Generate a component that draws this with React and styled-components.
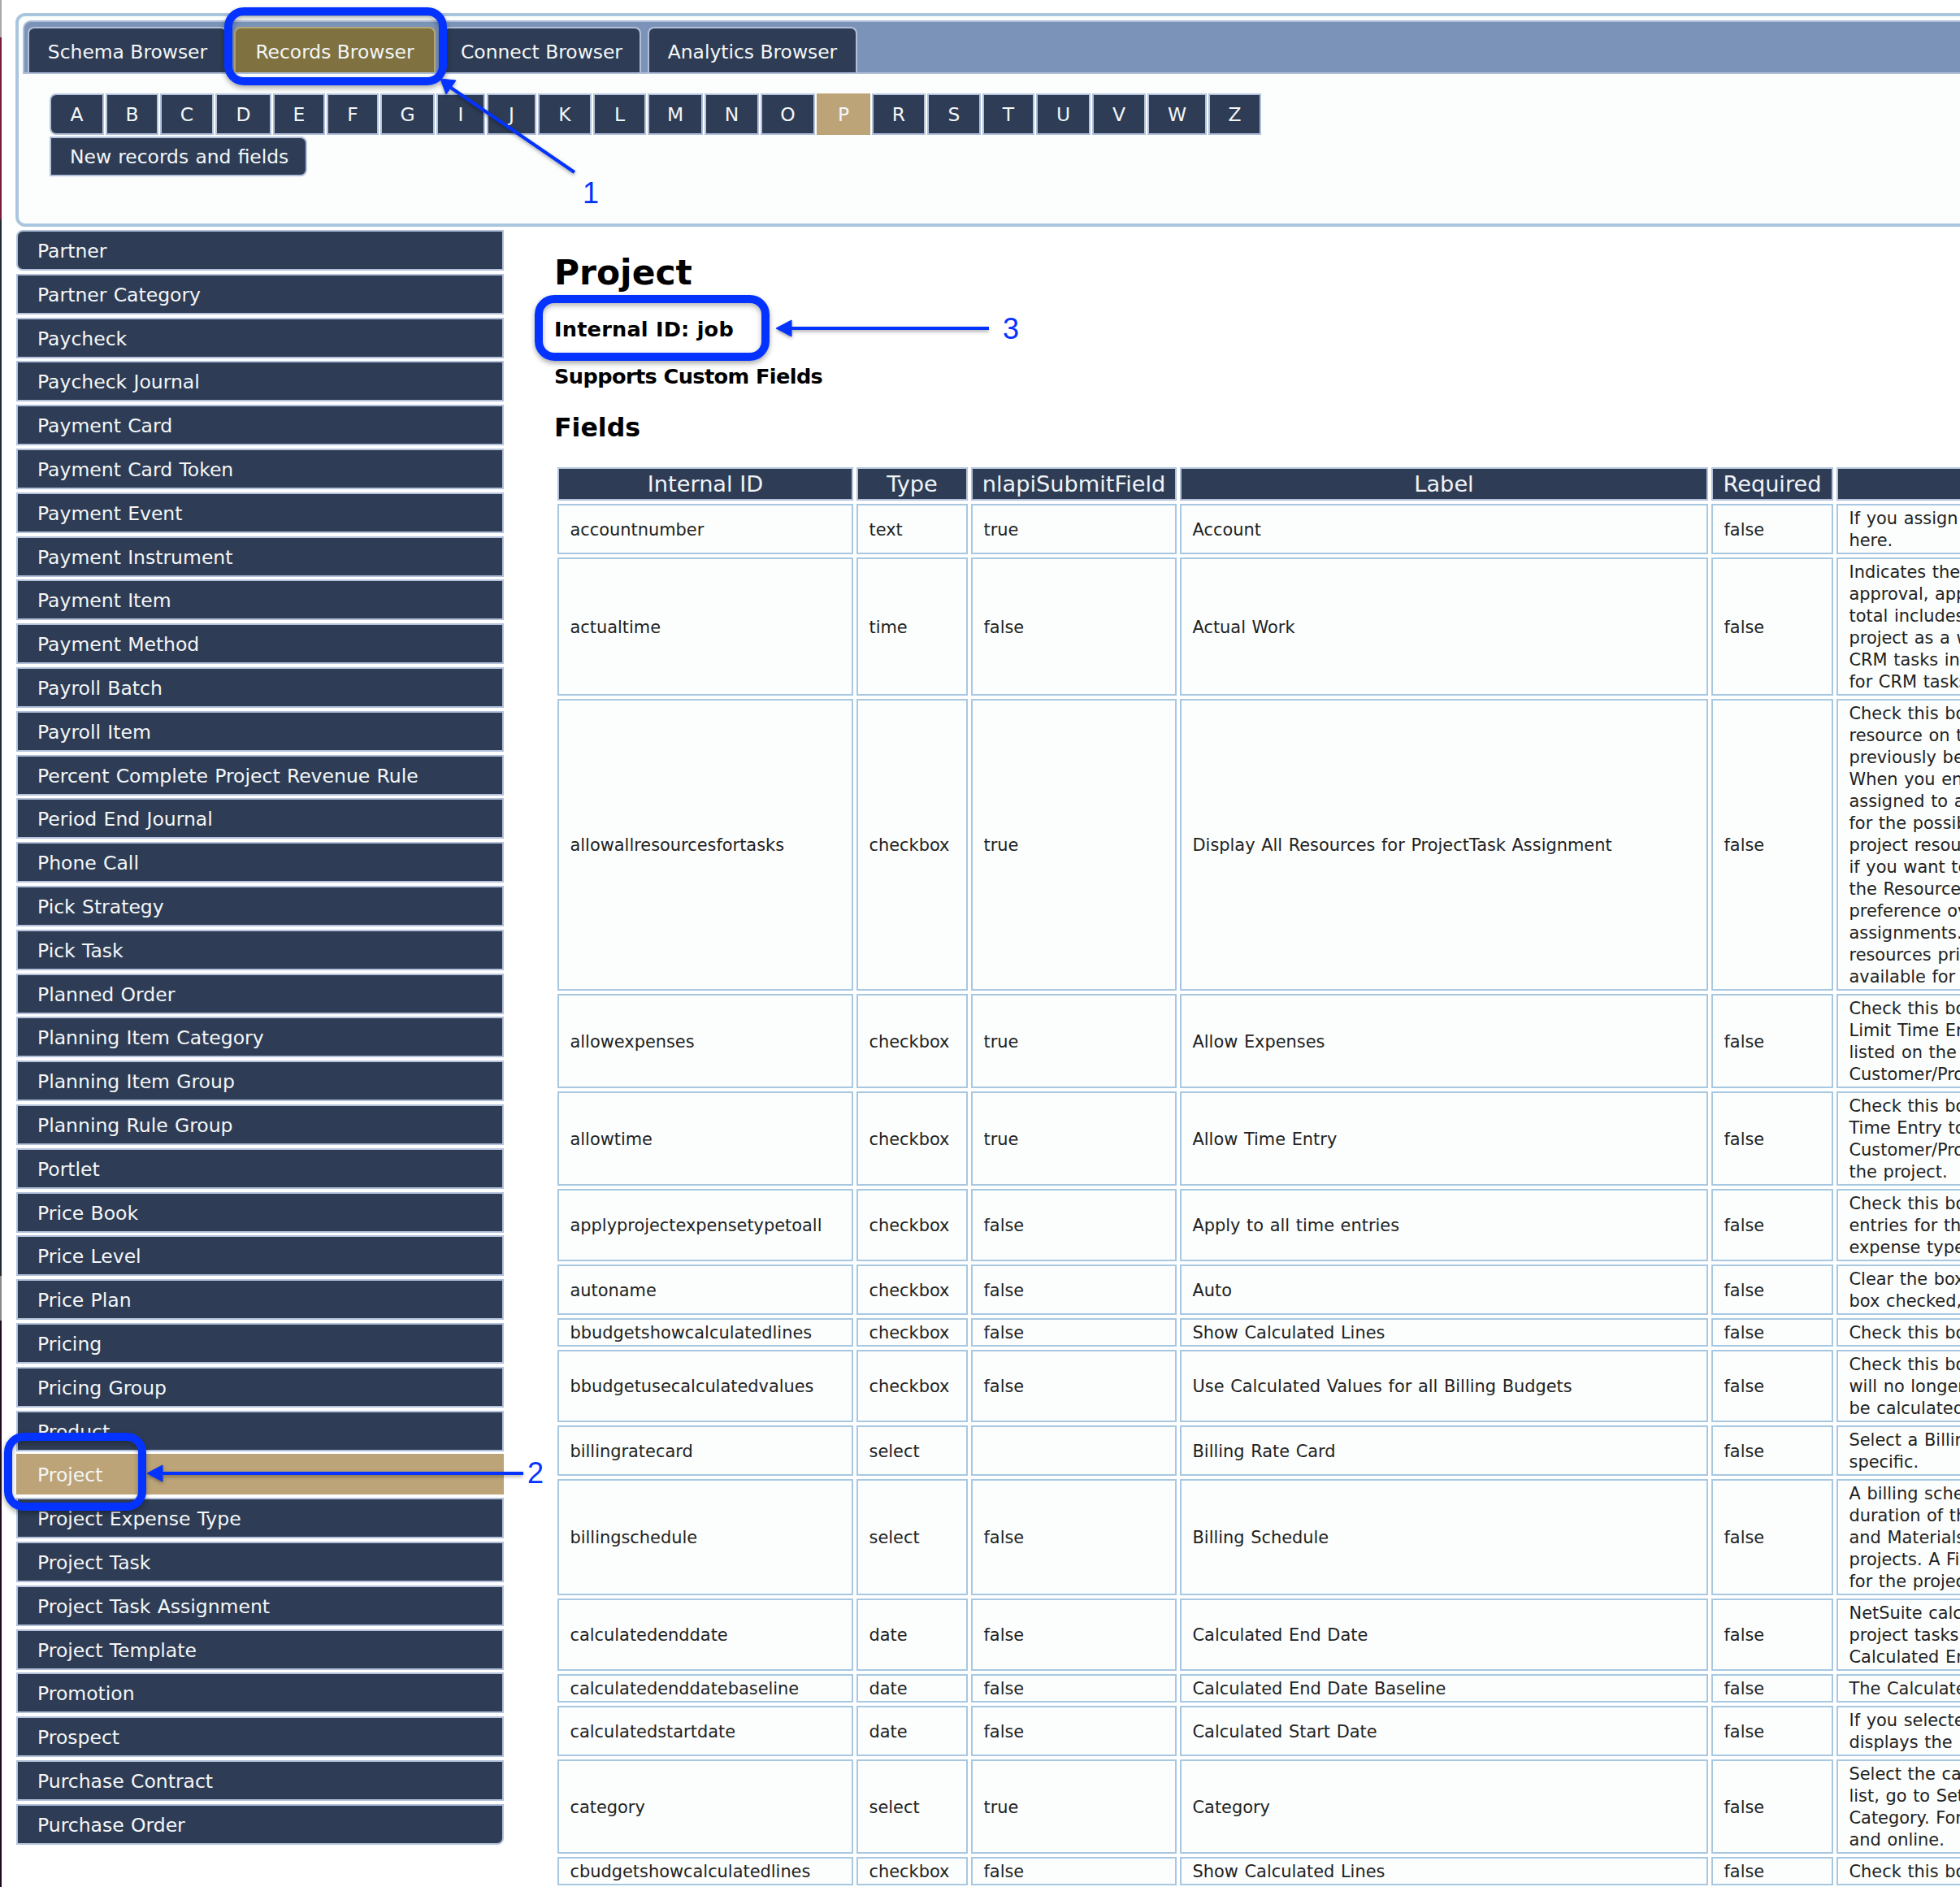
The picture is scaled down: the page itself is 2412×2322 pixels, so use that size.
import React from "react";
import styled, { createGlobalStyle } from "styled-components";

const GlobalStyle = createGlobalStyle`
  html, body {
    margin: 0;
    padding: 0;
    background: #ffffff;
    overflow: hidden;
  }
  body {
    font-family: "DejaVu Sans", Verdana, sans-serif;
  }
`;

const NAVY = "#2e3d55";
const TAN = "#bca478";
const SOFT_BORDER = "#b3c2da";
const CELL_BORDER = "#a8c8e2";
const CALLOUT = "#0433ff";

const TABS = [
  ["Schema Browser", 246],
  ["Records Browser", 248],
  ["Connect Browser", 245],
  ["Analytics Browser", 258],
];

// 글자 버튼 폭은 원본 폰트 기준이라 하나씩 지정
const LETTERS = [
  ["A", 69], ["B", 67], ["C", 68], ["D", 71], ["E", 66], ["F", 66], ["G", 69], ["I", 62],
  ["J", 63], ["K", 68], ["L", 67], ["M", 70], ["N", 69], ["O", 69], ["P", 68], ["R", 68],
  ["S", 68], ["T", 66], ["U", 69], ["V", 68], ["W", 75], ["Z", 67],
];

const RECORDS = [
  "Partner", "Partner Category", "Paycheck", "Paycheck Journal", "Payment Card",
  "Payment Card Token", "Payment Event", "Payment Instrument", "Payment Item",
  "Payment Method", "Payroll Batch", "Payroll Item", "Percent Complete Project Revenue Rule",
  "Period End Journal", "Phone Call", "Pick Strategy", "Pick Task", "Planned Order",
  "Planning Item Category", "Planning Item Group", "Planning Rule Group", "Portlet",
  "Price Book", "Price Level", "Price Plan", "Pricing", "Pricing Group", "Product", "Project",
  "Project Expense Type", "Project Task", "Project Task Assignment", "Project Template",
  "Promotion", "Prospect", "Purchase Contract", "Purchase Order",
];

const FIELDS = [
  ["accountnumber", "text", "true", "Account", ["If you assign", "here."]],
  ["actualtime", "time", "false", "Actual Work", ["Indicates the", "approval, approved", "total includes", "project as a whole", "CRM tasks in", "for CRM tasks"]],
  ["allowallresourcesfortasks", "checkbox", "true", "Display All Resources for ProjectTask Assignment", ["Check this box", "resource on the", "previously been", "When you enter", "assigned to a", "for the possible", "project resource", "if you want to", "the Resource", "preference over", "assignments.", "resources prior", "available for"]],
  ["allowexpenses", "checkbox", "true", "Allow Expenses", ["Check this box", "Limit Time Entry", "listed on the", "Customer/Project"]],
  ["allowtime", "checkbox", "true", "Allow Time Entry", ["Check this box", "Time Entry to", "Customer/Project", "the project."]],
  ["applyprojectexpensetypetoall", "checkbox", "false", "Apply to all time entries", ["Check this box", "entries for the", "expense type"]],
  ["autoname", "checkbox", "false", "Auto", ["Clear the box", "box checked,"]],
  ["bbudgetshowcalculatedlines", "checkbox", "false", "Show Calculated Lines", ["Check this box"]],
  ["bbudgetusecalculatedvalues", "checkbox", "false", "Use Calculated Values for all Billing Budgets", ["Check this box", "will no longer", "be calculated"]],
  ["billingratecard", "select", "", "Billing Rate Card", ["Select a Billing", "specific."]],
  ["billingschedule", "select", "false", "Billing Schedule", ["A billing schedule", "duration of the", "and Materials", "projects. A Fixed", "for the project"]],
  ["calculatedenddate", "date", "false", "Calculated End Date", ["NetSuite calculates", "project tasks", "Calculated End"]],
  ["calculatedenddatebaseline", "date", "false", "Calculated End Date Baseline", ["The Calculated"]],
  ["calculatedstartdate", "date", "false", "Calculated Start Date", ["If you selected", "displays the"]],
  ["category", "select", "true", "Category", ["Select the category", "list, go to Setup", "Category. For", "and online."]],
  ["cbudgetshowcalculatedlines", "checkbox", "false", "Show Calculated Lines", ["Check this box"]],
];

const Page = styled.div`
  position: relative;
  width: 2412px;
  height: 2322px;
  overflow: hidden;
  padding: 16px 0 0 19px;
  box-sizing: border-box;
`;

// 스크린샷 왼쪽 끝에 걸린 뒤쪽 창의 가장자리
const EdgeStrip = styled.div`
  position: absolute;
  top: 0;
  left: 0;
  width: 2px;
  height: 100%;
  background: linear-gradient(
    to bottom,
    #a8a8a8 0 46px,
    #7a1a3c 46px 270px,
    #232b33 270px 1570px,
    #8a8a8a 1570px 1625px,
    #1f0a1e 1625px
  );
`;

const TopPanel = styled.div`
  width: 2500px;
  height: 263px;
  box-sizing: border-box;
  border: 4px solid #a9c6de;
  border-radius: 12px 0 0 12px;
  background: #fcfefd;
  padding: 5px 0 0 5px;
`;

const TabBar = styled.div`
  display: flex;
  align-items: flex-end;
  gap: 8px;
  height: 66px;
  box-sizing: border-box;
  border: 2px solid #b1c0d8;
  border-radius: 10px 0 0 0;
  background: #7b93b8;
  padding-left: 4px;
`;

const Tab = styled.div`
  width: ${(props) => props.$width}px;
  height: 56px;
  box-sizing: border-box;
  padding-top: 3px;
  border: 2px solid ${(props) => (props.$active ? "#b5a878" : "#b1c0d8")};
  border-bottom: none;
  border-radius: 8px 8px 0 0;
  background: ${(props) => (props.$active ? "#7f7240" : NAVY)};
  color: #f4f6f8;
  font-size: 23.4px;
  line-height: 52px;
  text-align: center;
  white-space: nowrap;
`;

const LetterRow = styled.div`
  display: flex;
  margin: 24px 0 0 33px;
`;

const Letter = styled.div`
  width: ${(props) => props.$width - 2}px;
  height: 51px;
  margin-right: 2px;
  box-sizing: border-box;
  padding-top: 1px;
  border: 2px solid ${(props) => (props.$active ? TAN : SOFT_BORDER)};
  background: ${(props) => (props.$active ? TAN : NAVY)};
  color: #f4f6f8;
  font-size: 23.4px;
  line-height: 47px;
  text-align: center;

  &:first-child {
    border-radius: 8px 0 0 8px;
  }
`;

const NewRecordsButton = styled.div`
  width: 317px;
  height: 49px;
  margin: 2px 0 0 33px;
  box-sizing: border-box;
  padding: 1px 0 0 23px;
  border: 2px solid ${SOFT_BORDER};
  border-radius: 0 8px 8px 0;
  background: ${NAVY};
  color: #f4f6f8;
  font-size: 23.4px;
  line-height: 45px;
  word-spacing: 0.8px;
`;

const Body = styled.div`
  display: flex;
  gap: 62px;
  margin: 4px 0 0 1px;
`;

const SideList = styled.div`
  flex: 0 0 600px;
  display: flex;
  flex-direction: column;
  gap: 3.8px;
`;

const SideItem = styled.div`
  height: 50px;
  box-sizing: border-box;
  padding-left: 24px;
  border: 2px solid ${(props) => (props.$active ? TAN : SOFT_BORDER)};
  background: ${(props) => (props.$active ? TAN : NAVY)};
  color: #f4f6f8;
  font-size: 23.5px;
  line-height: 48px;
  word-spacing: 0.8px;
  white-space: nowrap;

  &:first-child {
    border-radius: 8px 0 0 8px;
  }
  &:last-child {
    border-radius: 0 0 8px 0;
  }
`;

const Content = styled.div`
  flex: 0 0 auto;
  color: #000000;
`;

const Title = styled.h1`
  margin: 29px 0 0 0;
  font-size: 42.4px;
  line-height: 48px;
  font-weight: 700;
`;

const SubTitle = styled.div`
  margin: ${(props) => props.$gap}px 0 0 0;
  font-size: 25.6px;
  line-height: 30px;
  font-weight: 700;
  letter-spacing: ${(props) => props.$tracking}px;
`;

const SectionTitle = styled.h2`
  margin: 29px 0 0 0;
  font-size: 31.6px;
  line-height: 38px;
  font-weight: 700;
`;

const FieldTable = styled.table`
  margin-top: 26px;
  table-layout: fixed;
  width: 2273px;
  border-collapse: separate;
  border-spacing: 4px;
`;

const HeadCell = styled.th`
  width: ${(props) => props.$width}px;
  height: 41px;
  box-sizing: border-box;
  padding: 1px 0 0;
  border: 2px solid ${SOFT_BORDER};
  background: ${NAVY};
  color: #f0f3f7;
  font-size: 27.2px;
  line-height: 36px;
  font-weight: 400;
  text-align: center;
`;

const Cell = styled.td`
  box-sizing: border-box;
  padding: 3px 13.5px 1px;
  border: 2px solid ${CELL_BORDER};
  background: #fcfefd;
  color: #222222;
  font-size: 20.9px;
  line-height: 27px;
  word-spacing: 1px;
  vertical-align: middle;
  white-space: nowrap;
`;

// 안내용 파란 테두리와 화살표, 숫자 (화면 위에 덧그린 주석)
const CalloutBox = styled.div`
  position: absolute;
  left: ${(props) => props.$left}px;
  top: ${(props) => props.$top}px;
  width: ${(props) => props.$width}px;
  height: ${(props) => props.$height}px;
  box-sizing: border-box;
  border: 10px solid ${CALLOUT};
  border-radius: 24px;
  box-shadow: 0 3px 6px rgba(0, 0, 0, 0.35), inset 0 3px 6px rgba(0, 0, 0, 0.3);
`;

const CalloutNumber = styled.div`
  position: absolute;
  left: ${(props) => props.$left}px;
  top: ${(props) => props.$top}px;
  color: ${CALLOUT};
  font-family: "Liberation Sans", Arial, sans-serif;
  font-size: 36px;
  line-height: 40px;
`;

const ArrowLayer = styled.svg`
  position: absolute;
  top: 0;
  left: 0;
  pointer-events: none;
  filter: drop-shadow(0 2px 2px rgba(0, 0, 0, 0.35));
`;

const COLUMNS = [
  ["Internal ID", 364],
  ["Type", 137],
  ["nlapiSubmitField", 253],
  ["Label", 650],
  ["Required", 150],
  ["", 695],
];

const App = () => {
  return (
    <Page>
      <GlobalStyle />
      <EdgeStrip />
      <TopPanel>
        <TabBar>
          {TABS.map(([tab, width]) => (
            <Tab key={tab} $width={width} $active={tab === "Records Browser"}>
              {tab}
            </Tab>
          ))}
        </TabBar>
        <LetterRow>
          {LETTERS.map(([letter, width]) => (
            <Letter key={letter} $width={width} $active={letter === "P"}>
              {letter}
            </Letter>
          ))}
        </LetterRow>
        <NewRecordsButton>New records and fields</NewRecordsButton>
      </TopPanel>

      <Body>
        <SideList>
          {RECORDS.map((record) => (
            <SideItem key={record} $active={record === "Project"}>
              {record}
            </SideItem>
          ))}
        </SideList>
        <Content>
          <Title>Project</Title>
          <SubTitle $gap={30} $tracking={0.2}>Internal ID: job</SubTitle>
          <SubTitle $gap={28} $tracking={-0.6}>Supports Custom Fields</SubTitle>
          <SectionTitle>Fields</SectionTitle>
          <FieldTable>
            <thead>
              <tr>
                {COLUMNS.map(([name, width]) => (
                  <HeadCell key={name || "help"} $width={width}>
                    {name}
                  </HeadCell>
                ))}
              </tr>
            </thead>
            <tbody>
              {FIELDS.map(([id, type, submit, label, help]) => (
                <tr key={id}>
                  <Cell>{id}</Cell>
                  <Cell>{type}</Cell>
                  <Cell>{submit}</Cell>
                  <Cell>{label}</Cell>
                  <Cell>false</Cell>
                  <Cell>
                    {help.map((line) => (
                      <div key={line}>{line}</div>
                    ))}
                  </Cell>
                </tr>
              ))}
            </tbody>
          </FieldTable>
        </Content>
      </Body>

      <CalloutBox $left={276} $top={9} $width={274} $height={96} />
      <CalloutBox $left={5} $top={1763} $width={175} $height={96} />
      <CalloutBox $left={658} $top={363} $width={289} $height={81} />
      <ArrowLayer width="2412" height="2322" viewBox="0 0 2412 2322">
        <g fill={CALLOUT} stroke={CALLOUT}>
          <line x1="707" y1="212" x2="552" y2="106" strokeWidth="4" />
          <polygon points="542,97 561,99 549,116" strokeWidth="1" />
          <line x1="644" y1="1813" x2="196" y2="1813" strokeWidth="4" />
          <polygon points="181,1813 200,1803 200,1823" strokeWidth="1" />
          <line x1="1217" y1="404" x2="970" y2="404" strokeWidth="4" />
          <polygon points="955,404 974,394 974,414" strokeWidth="1" />
        </g>
      </ArrowLayer>
      <CalloutNumber $left={717} $top={218}>1</CalloutNumber>
      <CalloutNumber $left={649} $top={1793}>2</CalloutNumber>
      <CalloutNumber $left={1234} $top={385}>3</CalloutNumber>
    </Page>
  );
};

export default App;
